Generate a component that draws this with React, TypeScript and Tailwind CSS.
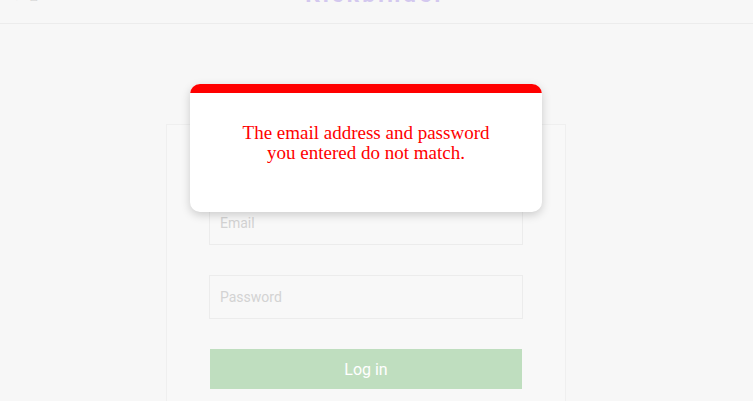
export default function App() {
  return (
    <div className="relative h-[401px] w-full overflow-hidden bg-[#f7f7f7] font-['Roboto',sans-serif]">
      <header className="relative h-[24px] overflow-hidden border-b border-[#ececec]">
        <span className="absolute left-[12px] top-[-14px] text-[14px] text-[#d0d0d0]">← ⌂</span>
        <div className="flex justify-center pr-[2px]">
          <span className="mt-[-22px] text-[23px] font-bold tracking-[3px] text-[#d3c8ef]">
            Kickbinder
          </span>
        </div>
      </header>

      <main className="flex justify-center pt-[100px] pr-[21px]">
        <div className="w-[400px] border border-[#efefef] bg-[#f8f8f8] px-[42px] pt-[76px] pb-[20px]">
          <input
            className="block h-[44px] w-full border border-[#ececec] bg-[#f8f8f8] px-[10px] text-[14px] outline-none placeholder:text-[#d3d3d3]"
            placeholder="Email"
          />
          <input
            type="password"
            className="mt-[30px] block h-[44px] w-full border border-[#ececec] bg-[#f8f8f8] px-[10px] text-[14px] outline-none placeholder:text-[#d3d3d3]"
            placeholder="Password"
          />
          <button className="mx-[1px] mt-[30px] block h-[40px] w-[312px] bg-[#bfdebf] pt-[1px] text-[16px] text-white">
            Log in
          </button>
        </div>
      </main>

      <div className="absolute left-[190px] top-[84px] flex h-[128px] w-[352px] flex-col overflow-hidden rounded-[10px] bg-white shadow-[0_3px_10px_rgba(0,0,0,0.18)]">
        <div className="h-[9px] bg-[#ff0000]" />
        <div className="flex flex-1 items-start justify-center pt-[30px]">
          <p className="text-center font-['Liberation_Serif',serif] text-[19px] leading-[20px] text-[#ff0000]">
            The email address and password
            <br />
            you entered do not match.
          </p>
        </div>
      </div>
    </div>
  );
}
